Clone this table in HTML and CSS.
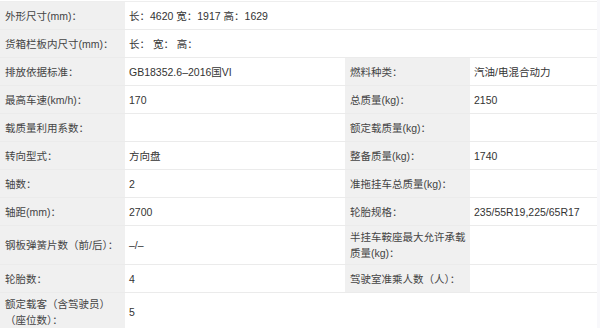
FILE: index.html
```html
<!DOCTYPE html>
<html lang="zh-CN">
<head>
<meta charset="utf-8">
<title>车辆参数</title>
<link rel="stylesheet" href="styles.css">
</head>
<body>
<div class="page">
  <div class="spec">
    <div class="cell label">外形尺寸(mm)：</div>
    <div class="cell value wide">长：4620 宽：1917 高：1629</div>

    <div class="cell label">货箱栏板内尺寸(mm)：</div>
    <div class="cell value wide">长：&nbsp;宽：&nbsp;高：</div>

    <div class="cell label">排放依据标准：</div>
    <div class="cell value">GB18352.6–2016国VI</div>
    <div class="cell label">燃料种类：</div>
    <div class="cell value">汽油/电混合动力</div>

    <div class="cell label">最高车速(km/h)：</div>
    <div class="cell value">170</div>
    <div class="cell label">总质量(kg)：</div>
    <div class="cell value">2150</div>

    <div class="cell label">载质量利用系数：</div>
    <div class="cell value"></div>
    <div class="cell label">额定载质量(kg)：</div>
    <div class="cell value"></div>

    <div class="cell label">转向型式：</div>
    <div class="cell value">方向盘</div>
    <div class="cell label">整备质量(kg)：</div>
    <div class="cell value">1740</div>

    <div class="cell label">轴数：</div>
    <div class="cell value">2</div>
    <div class="cell label">准拖挂车总质量(kg)：</div>
    <div class="cell value"></div>

    <div class="cell label">轴距(mm)：</div>
    <div class="cell value">2700</div>
    <div class="cell label">轮胎规格：</div>
    <div class="cell value">235/55R19,225/65R17</div>

    <div class="cell label">钢板弹簧片数（前/后）：</div>
    <div class="cell value">–/–</div>
    <div class="cell label">半挂车鞍座最大允许承载质量(kg)：</div>
    <div class="cell value"></div>

    <div class="cell label">轮胎数：</div>
    <div class="cell value">4</div>
    <div class="cell label">驾驶室准乘人数（人）：</div>
    <div class="cell value"></div>

    <div class="cell label">额定载客（含驾驶员）（座位数）：</div>
    <div class="cell value wide">5</div>
  </div>
</div>
</body>
</html>
```

FILE: styles.css
```css
html, body {
  margin: 0;
  padding: 0;
}

body {
  background: #f8f8fb;
  font-family: "Liberation Sans", "Noto Sans CJK SC", sans-serif;
  font-size: 10.5px;
  color: #333;
}

.page {
  width: 597px;
  padding-top: 1px;
  background: #fff;
}

.spec {
  display: grid;
  grid-template-columns: 125px 220px 125px 127px;
  border-top: 1px solid #eeeeee;
}

.cell {
  display: flex;
  align-items: center;
  box-sizing: border-box;
  min-height: 28px;
  padding: 3px 4px 3px 5px;
  line-height: 16px;
  border-bottom: 1px solid #ebebeb;
  background: #fff;
}

.label {
  background: #f0f0f0;
  color: #444;
}

.value {
  padding-left: 4px;
}

.wide {
  grid-column: span 3;
}
```
